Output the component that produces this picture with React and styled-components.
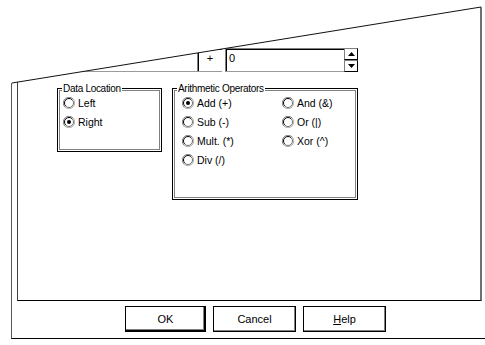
import styled, { createGlobalStyle } from 'styled-components';

const GlobalStyle = createGlobalStyle`
    body{
        margin: 0;
        background: #fff;
        font-family: "Liberation Sans", Arial, sans-serif;
        font-size: 11px;
        color: #000;
    }
`;

const locations = [
    { label: 'Left', checked: false },
    { label: 'Right', checked: true },
];

const operators = [
    { label: 'Add (+)', checked: true },
    { label: 'And (&)' },
    { label: 'Sub (-)' },
    { label: 'Or (|)' },
    { label: 'Mult. (*)' },
    { label: 'Xor (^)' },
    { label: 'Div (/)' },
];

const RadioMark = ({ checked }) => (
    <svg width="12" height="12" viewBox="0 0 12 12">
        <path d="M1.9 10.1 A5.8 5.8 0 0 1 10.1 1.9" fill="none" stroke="#808080" strokeWidth="1" />
        <path d="M10.1 1.9 A5.8 5.8 0 0 1 1.9 10.1" fill="none" stroke="#b0b0b0" strokeWidth="1" />
        <path d="M2.8 9.2 A4.5 4.5 0 0 1 9.2 2.8" fill="none" stroke="#000" strokeWidth="1" />
        <path d="M9.2 2.8 A4.5 4.5 0 0 1 2.8 9.2" fill="none" stroke="#707070" strokeWidth="1" />
        {checked && <circle cx="6" cy="6" r="2" fill="#000" />}
    </svg>
);

const Radio = ({ label, checked }) => (
    <RadioRow>
        <RadioMark checked={checked} />
        <span>{label}</span>
    </RadioRow>
);

const App = () => {
    return (
        <>
            <GlobalStyle />
            <Page>
                <Outer>
                    <Inner>
                        <FieldRow>
                            <Field $width={167} />
                            <Field $width={25} $center>+</Field>
                            <Field $width={119} $gap={3}>0</Field>
                            <Spinner>
                                <SpinButton>
                                    <svg width="7" height="4" viewBox="0 0 7 4"><polygon points="0,4 7,4 3.5,0" fill="#000" /></svg>
                                </SpinButton>
                                <SpinButton>
                                    <svg width="7" height="4" viewBox="0 0 7 4"><polygon points="0,0 7,0 3.5,4" fill="#000" /></svg>
                                </SpinButton>
                            </Spinner>
                        </FieldRow>

                        <GroupsRow>
                            <Group $width={105} $height={64} $padLeft={5}>
                                <Legend>Data Location</Legend>
                                {locations.map((item) => (
                                    <Radio key={item.label} {...item} />
                                ))}
                            </Group>
                            <Group $width={186} $height={112} $padLeft={9}>
                                <Legend>Arithmetic Operators</Legend>
                                <RadioGrid>
                                    {operators.map((item) => (
                                        <Radio key={item.label} {...item} />
                                    ))}
                                </RadioGrid>
                            </Group>
                        </GroupsRow>
                    </Inner>

                    <ButtonRow>
                        <Button $width={81} $default>OK</Button>
                        <Button $width={83}>Cancel</Button>
                        <Button $width={83}><u>H</u>elp</Button>
                    </ButtonRow>
                </Outer>

                <Cut width="485" height="345" viewBox="0 0 485 345">
                    <polygon points="0,0 485,0 485,6.4 12,83 0,83" fill="#fff" />
                    <line x1="12" y1="83" x2="481" y2="7" stroke="#111" strokeWidth="1" />
                </Cut>
            </Page>
        </>
    );
};

const Page = styled.div`
    position: relative;
    width: 485px;
    height: 345px;
    overflow: hidden;
    background: #fff;
`;

const Outer = styled.div`
    box-sizing: border-box;
    width: 480px;
    height: 339px;
    margin-left: 11px;
    padding-left: 5px;
    border-left: 1px solid #555;
    border-bottom: 1px solid #000;
    display: flex;
    flex-direction: column;
`;

const Inner = styled.div`
    box-sizing: border-box;
    width: 465px;
    height: 301px;
    padding-top: 48px;
    border-left: 1px solid #404040;
    border-right: 2px solid #707070;
    border-bottom: 1px solid #000;
    display: flex;
    flex-direction: column;
`;

const FieldRow = styled.div`
    display: flex;
    height: 24px;
    margin-left: 12px;
`;

const Field = styled.div`
    box-sizing: border-box;
    width: ${(p) => p.$width}px;
    margin-left: ${(p) => p.$gap || 0}px;
    border-top: 1px solid #808080;
    border-left: 1px solid #808080;
    border-bottom: 1px solid #9a9a9a;
    box-shadow: inset 1px 1px 0 #000;
    padding: 2px 0 0 3px;
    line-height: 14px;
    text-align: ${(p) => (p.$center ? 'center' : 'left')};
    ${(p) => p.$center && 'padding-left: 0;'}
`;

const Spinner = styled.div`
    width: 14px;
    display: flex;
    flex-direction: column;
`;

const SpinButton = styled.div`
    box-sizing: border-box;
    flex: 1;
    display: flex;
    align-items: center;
    justify-content: center;
    border-top: 1px solid #808080;
    border-left: 1px solid #808080;
    border-right: 1px solid #000;
    border-bottom: 1px solid #000;
`;

const GroupsRow = styled.div`
    display: flex;
    align-items: flex-start;
    gap: 10px;
    margin-top: 16px;
    margin-left: 39px;
`;

const Group = styled.div`
    position: relative;
    box-sizing: border-box;
    width: ${(p) => p.$width}px;
    height: ${(p) => p.$height}px;
    padding: 4px 0 0 ${(p) => p.$padLeft}px;
    border: 1px solid #000;
    box-shadow: inset 0 0 0 1px #fff, inset 0 0 0 2px #808080;
`;

const Legend = styled.span`
    position: absolute;
    top: -6px;
    left: 4px;
    padding: 0 1px;
    background: #fff;
    font-size: 10px;
    letter-spacing: -0.3px;
    line-height: 12px;
`;

const RadioGrid = styled.div`
    display: grid;
    grid-template-columns: 100px auto;
`;

const RadioRow = styled.div`
    display: flex;
    align-items: center;
    gap: 3px;
    height: 19px;
    font-size: 10.5px;
`;

const ButtonRow = styled.div`
    display: flex;
    gap: 7px;
    margin-top: 5px;
    margin-left: 108px;
`;

const Button = styled.div`
    box-sizing: border-box;
    width: ${(p) => p.$width}px;
    height: 26px;
    display: flex;
    align-items: center;
    justify-content: center;
    border: 1px solid #000;
    box-shadow: ${(p) => (p.$default
        ? 'inset -1px -1px 0 #000, inset -2px -2px 0 #808080'
        : 'inset -1px -1px 0 #808080')};
`;

const Cut = styled.svg`
    position: absolute;
    top: 0;
    left: 0;
    pointer-events: none;
`;

export default App;
